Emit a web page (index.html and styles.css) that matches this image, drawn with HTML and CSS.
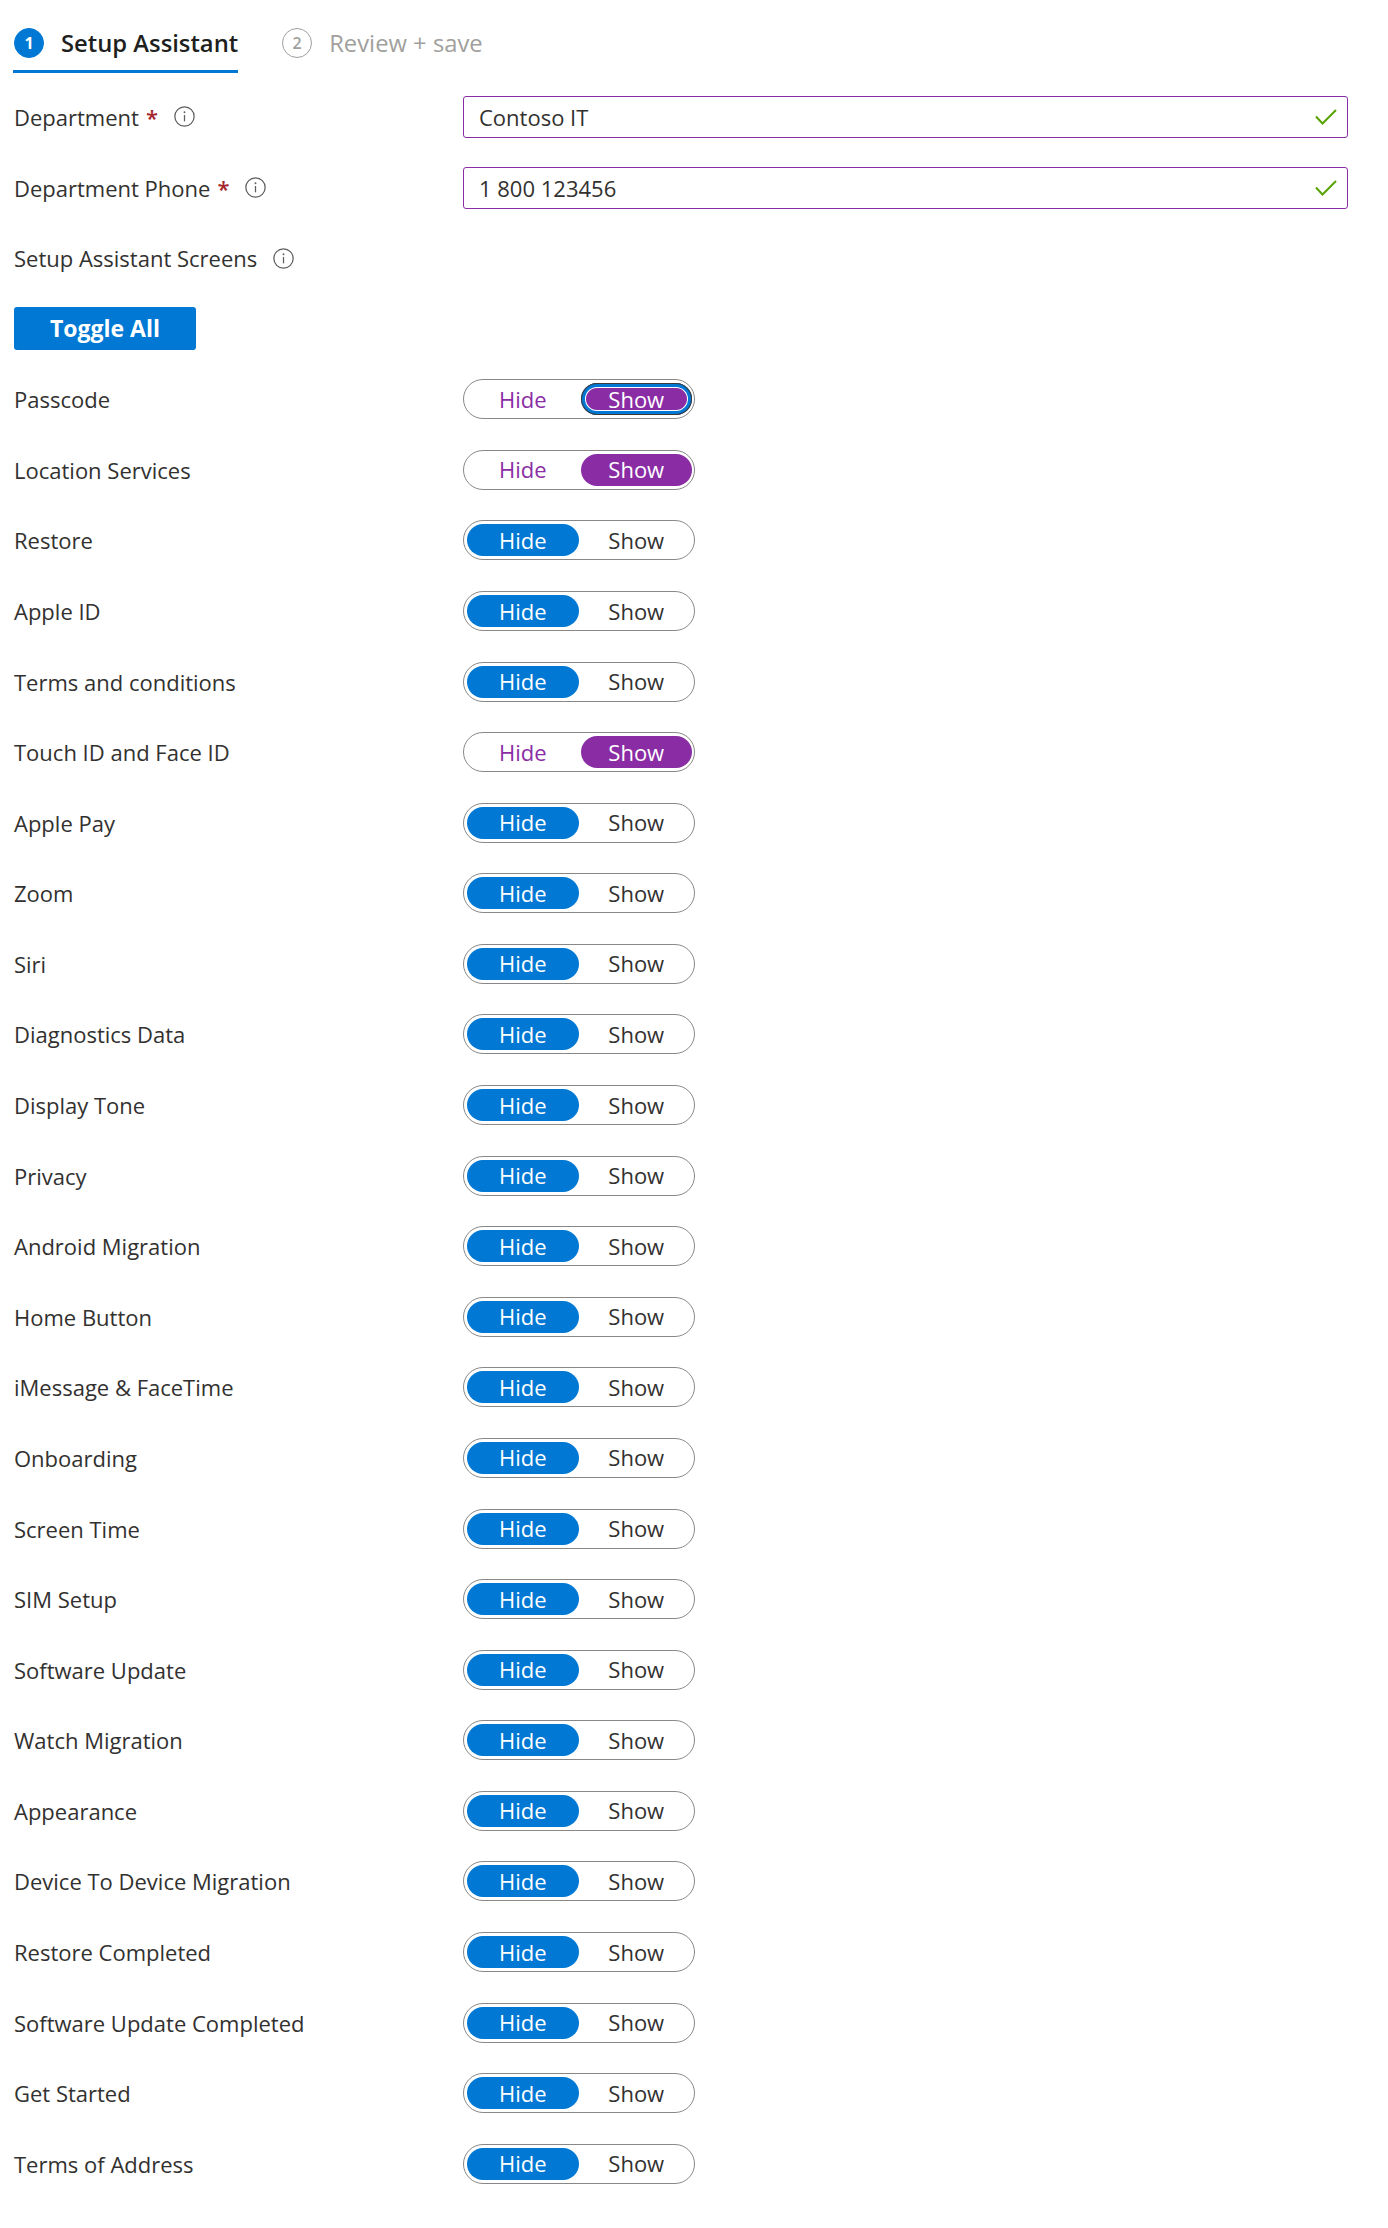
FILE: index.html
```html
<!DOCTYPE html>
<html lang="en">
<head>
<meta charset="utf-8">
<title>Setup Assistant</title>
<link rel="stylesheet" href="styles.css">
</head>
<body>
<div class="page">
  <nav class="tabs">
    <div class="tab active"><span class="step">1</span><span class="tab-label">Setup Assistant</span></div>
    <div class="tab"><span class="step">2</span><span class="tab-label">Review + save</span></div>
  </nav>

  <div class="form">
    <div class="row">
      <div class="label">Department<span class="req">*</span><svg class="info" viewBox="0 0 20 20"><circle cx="10" cy="10" r="9.2"/><line x1="10" y1="8.6" x2="10" y2="14.6"/><circle class="dot" cx="10" cy="5.9" r="0.9"/></svg></div>
      <div class="field"><div class="input"><span>Contoso IT</span><svg class="check" viewBox="0 0 22 16"><polyline points="1,7.5 7.5,14.5 21,1"/></svg></div></div>
    </div>
    <div class="row">
      <div class="label">Department Phone<span class="req">*</span><svg class="info" viewBox="0 0 20 20"><circle cx="10" cy="10" r="9.2"/><line x1="10" y1="8.6" x2="10" y2="14.6"/><circle class="dot" cx="10" cy="5.9" r="0.9"/></svg></div>
      <div class="field"><div class="input"><span>1 800 123456</span><svg class="check" viewBox="0 0 22 16"><polyline points="1,7.5 7.5,14.5 21,1"/></svg></div></div>
    </div>
    <div class="row">
      <div class="label">Setup Assistant Screens<svg class="info" viewBox="0 0 20 20"><circle cx="10" cy="10" r="9.2"/><line x1="10" y1="8.6" x2="10" y2="14.6"/><circle class="dot" cx="10" cy="5.9" r="0.9"/></svg></div>
      <div class="field"></div>
    </div>
    <div class="row">
      <div class="label"><button class="btn">Toggle All</button></div>
      <div class="field"></div>
    </div>

    <div class="row"><div class="label">Passcode</div><div class="field"><div class="toggle show"><span class="opt hide-opt">Hide</span><span class="opt show-opt focus">Show</span></div></div></div>
    <div class="row"><div class="label">Location Services</div><div class="field"><div class="toggle show"><span class="opt hide-opt">Hide</span><span class="opt show-opt">Show</span></div></div></div>
    <div class="row"><div class="label">Restore</div><div class="field"><div class="toggle hide"><span class="opt hide-opt">Hide</span><span class="opt show-opt">Show</span></div></div></div>
    <div class="row"><div class="label">Apple ID</div><div class="field"><div class="toggle hide"><span class="opt hide-opt">Hide</span><span class="opt show-opt">Show</span></div></div></div>
    <div class="row"><div class="label">Terms and conditions</div><div class="field"><div class="toggle hide"><span class="opt hide-opt">Hide</span><span class="opt show-opt">Show</span></div></div></div>
    <div class="row"><div class="label">Touch ID and Face ID</div><div class="field"><div class="toggle show"><span class="opt hide-opt">Hide</span><span class="opt show-opt">Show</span></div></div></div>
    <div class="row"><div class="label">Apple Pay</div><div class="field"><div class="toggle hide"><span class="opt hide-opt">Hide</span><span class="opt show-opt">Show</span></div></div></div>
    <div class="row"><div class="label">Zoom</div><div class="field"><div class="toggle hide"><span class="opt hide-opt">Hide</span><span class="opt show-opt">Show</span></div></div></div>
    <div class="row"><div class="label">Siri</div><div class="field"><div class="toggle hide"><span class="opt hide-opt">Hide</span><span class="opt show-opt">Show</span></div></div></div>
    <div class="row"><div class="label">Diagnostics Data</div><div class="field"><div class="toggle hide"><span class="opt hide-opt">Hide</span><span class="opt show-opt">Show</span></div></div></div>
    <div class="row"><div class="label">Display Tone</div><div class="field"><div class="toggle hide"><span class="opt hide-opt">Hide</span><span class="opt show-opt">Show</span></div></div></div>
    <div class="row"><div class="label">Privacy</div><div class="field"><div class="toggle hide"><span class="opt hide-opt">Hide</span><span class="opt show-opt">Show</span></div></div></div>
    <div class="row"><div class="label">Android Migration</div><div class="field"><div class="toggle hide"><span class="opt hide-opt">Hide</span><span class="opt show-opt">Show</span></div></div></div>
    <div class="row"><div class="label">Home Button</div><div class="field"><div class="toggle hide"><span class="opt hide-opt">Hide</span><span class="opt show-opt">Show</span></div></div></div>
    <div class="row"><div class="label">iMessage &amp; FaceTime</div><div class="field"><div class="toggle hide"><span class="opt hide-opt">Hide</span><span class="opt show-opt">Show</span></div></div></div>
    <div class="row"><div class="label">Onboarding</div><div class="field"><div class="toggle hide"><span class="opt hide-opt">Hide</span><span class="opt show-opt">Show</span></div></div></div>
    <div class="row"><div class="label">Screen Time</div><div class="field"><div class="toggle hide"><span class="opt hide-opt">Hide</span><span class="opt show-opt">Show</span></div></div></div>
    <div class="row"><div class="label">SIM Setup</div><div class="field"><div class="toggle hide"><span class="opt hide-opt">Hide</span><span class="opt show-opt">Show</span></div></div></div>
    <div class="row"><div class="label">Software Update</div><div class="field"><div class="toggle hide"><span class="opt hide-opt">Hide</span><span class="opt show-opt">Show</span></div></div></div>
    <div class="row"><div class="label">Watch Migration</div><div class="field"><div class="toggle hide"><span class="opt hide-opt">Hide</span><span class="opt show-opt">Show</span></div></div></div>
    <div class="row"><div class="label">Appearance</div><div class="field"><div class="toggle hide"><span class="opt hide-opt">Hide</span><span class="opt show-opt">Show</span></div></div></div>
    <div class="row"><div class="label">Device To Device Migration</div><div class="field"><div class="toggle hide"><span class="opt hide-opt">Hide</span><span class="opt show-opt">Show</span></div></div></div>
    <div class="row"><div class="label">Restore Completed</div><div class="field"><div class="toggle hide"><span class="opt hide-opt">Hide</span><span class="opt show-opt">Show</span></div></div></div>
    <div class="row"><div class="label">Software Update Completed</div><div class="field"><div class="toggle hide"><span class="opt hide-opt">Hide</span><span class="opt show-opt">Show</span></div></div></div>
    <div class="row"><div class="label">Get Started</div><div class="field"><div class="toggle hide"><span class="opt hide-opt">Hide</span><span class="opt show-opt">Show</span></div></div></div>
    <div class="row"><div class="label">Terms of Address</div><div class="field"><div class="toggle hide"><span class="opt hide-opt">Hide</span><span class="opt show-opt">Show</span></div></div></div>
  </div>
</div>
</body>
</html>
```

FILE: styles.css
```css
* { box-sizing: border-box; }
html, body { margin: 0; padding: 0; background: #fff; }
body {
  font-family: "Open Sans", "Noto Sans", "Liberation Sans", sans-serif;
  font-size: 22px;
  color: #323130;
}
.page { padding: 0 40px 0 13px; }

.tabs {
  display: flex;
  height: 73px;
  gap: 43px;
  margin-bottom: 8.7px;
}
.tab {
  display: flex;
  align-items: center;
  gap: 17px;
  padding-top: 15px;
  border-bottom: 3px solid transparent;
  color: #a19f9d;
  font-size: 23.8px;
}
.tab.active {
  border-bottom-color: #0078d4;
  color: #201f1e;
  font-weight: 600;
}
.step {
  width: 30px; height: 30px;
  border-radius: 50%;
  border: 1.5px solid #a19f9d;
  display: flex; align-items: center; justify-content: center;
  font-size: 16px;
  font-weight: 600;
  color: #a19f9d;
  margin-left: 1px;
}
.tab.active .step {
  background: #0078d4;
  border-color: #0078d4;
  color: #fff;
  font-weight: 700;
}

.form { display: flex; flex-direction: column; }
.row {
  height: 70.58px;
  display: grid;
  grid-template-columns: 450px 1fr;
  align-items: center;
}
.label {
  display: flex;
  align-items: center;
  padding-left: 1px;
  white-space: nowrap;
}
.req { color: #a4262c; margin-left: 7px; font-weight: 600; }
.info {
  width: 21px; height: 21px;
  margin-left: 16px;
  fill: none;
  stroke: #605e5c;
  stroke-width: 1.2;
}
.info .dot { fill: #605e5c; stroke: none; }

.input {
  height: 42px;
  border: 1.5px solid #8a2da5;
  border-radius: 3px;
  display: flex;
  align-items: center;
  justify-content: space-between;
  padding: 0 10px 0 15px;
}
.check {
  width: 22px; height: 16px;
  fill: none;
  stroke: #57a300;
  stroke-width: 2;
}

.btn {
  width: 182px; height: 43px;
  margin-top: 0;
  background: #0078d4;
  border: none;
  border-radius: 3px;
  color: #fff;
  font: inherit;
  font-size: 23px;
  font-weight: 700;
  padding: 0 0 2px;
}

.toggle {
  width: 232px; height: 40px;
  border: 1px solid #8a8886;
  border-radius: 20px;
  padding: 3px 2px 3px 3px;
  display: grid;
  grid-template-columns: 1fr 1fr;
  gap: 2px;
}
.opt {
  border-radius: 17px;
  display: flex;
  align-items: center;
  justify-content: center;
  padding-bottom: 1px;
}
.toggle.hide .hide-opt { background: #0078d4; color: #fff; }
.toggle.hide .show-opt { color: #323130; }
.toggle.show .show-opt { background: #8a2da5; color: #fff; }
.toggle.show .hide-opt { color: #8a2da5; }
.opt.focus {
  box-shadow: inset 0 0 0 1px #3b3a39, inset 0 0 0 4px #0078d4, inset 0 0 0 5px #fff;
}
```
